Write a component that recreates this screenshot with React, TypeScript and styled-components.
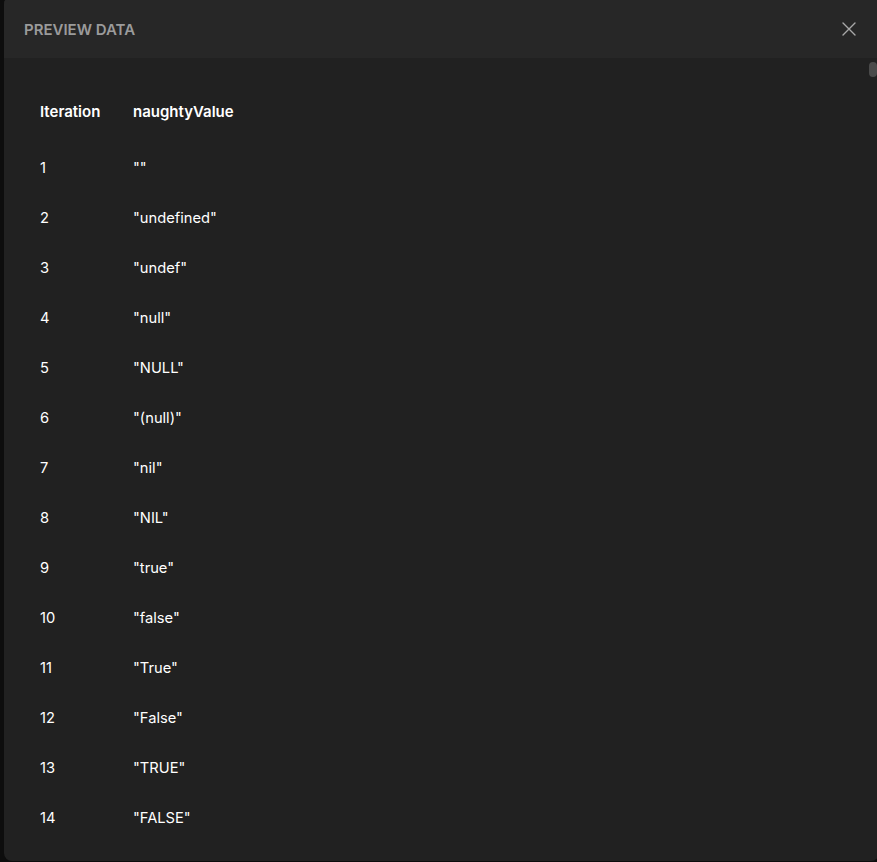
import React from "react";
import styled, { createGlobalStyle } from "styled-components";

const Global = createGlobalStyle`
  html, body { margin: 0; padding: 0; background: #0d0d0d; overflow: hidden; }
  body { font-family: Inter, "Noto Sans", sans-serif; -webkit-font-smoothing: antialiased; }
`;

const Modal = styled.div`
  position: relative;
  margin: -4px 0 0 4px;
  width: 875px;
  height: 865px;
  border-radius: 8px;
  background: #212121;
  overflow: hidden;
  display: flex;
  flex-direction: column;
`;

const Header = styled.div`
  height: 62px;
  padding: 4px 18px 0 20px;
  box-sizing: border-box;
  background: #272727;
  display: flex;
  align-items: center;
  justify-content: space-between;
  flex-shrink: 0;
`;

const Title = styled.h2`
  margin: 0;
  font-size: 15px;
  font-weight: 600;
  color: #9b9b9b;
`;

const CloseButton = styled.button`
  width: 24px;
  height: 24px;
  padding: 0;
  border: 0;
  background: transparent;
  display: flex;
  align-items: center;
  justify-content: center;
  color: #a8a8a8;
  cursor: pointer;
`;

const Body = styled.div`
  flex: 1;
  padding: 28px 0 0 36px;
  overflow: hidden;
`;

const Row = styled.div<{ $head?: boolean }>`
  display: grid;
  grid-template-columns: 93px 1fr;
  height: 50px;
  align-items: center;
  margin-bottom: ${(p) => (p.$head ? "7px" : "0")};
  font-size: ${(p) => (p.$head ? "15px" : "14.7px")};
  font-weight: ${(p) => (p.$head ? 600 : 400)};
  color: #ffffff;
`;

const Cell = styled.div`
  white-space: pre;
`;

const ScrollThumb = styled.div`
  position: absolute;
  right: 2px;
  top: 66px;
  width: 8px;
  height: 15px;
  border-radius: 4px;
  background: #4b4b4b;
`;

const values = [
  '""',
  '"undefined"',
  '"undef"',
  '"null"',
  '"NULL"',
  '"(null)"',
  '"nil"',
  '"NIL"',
  '"true"',
  '"false"',
  '"True"',
  '"False"',
  '"TRUE"',
  '"FALSE"',
];

export default function App() {
  return (
    <>
      <Global />
      <Modal>
        <Header>
          <Title>PREVIEW DATA</Title>
          <CloseButton aria-label="Close">
            <svg width="14" height="14" viewBox="0 0 14 14" fill="none">
              <path d="M1 1L13 13M13 1L1 13" stroke="currentColor" strokeWidth="1.4" strokeLinecap="round" />
            </svg>
          </CloseButton>
        </Header>
        <Body>
          <Row $head>
            <Cell>Iteration</Cell>
            <Cell>naughtyValue</Cell>
          </Row>
          {values.map((v, i) => (
            <Row key={i}>
              <Cell>{i + 1}</Cell>
              <Cell>{v}</Cell>
            </Row>
          ))}
        </Body>
        <ScrollThumb />
      </Modal>
    </>
  );
}
